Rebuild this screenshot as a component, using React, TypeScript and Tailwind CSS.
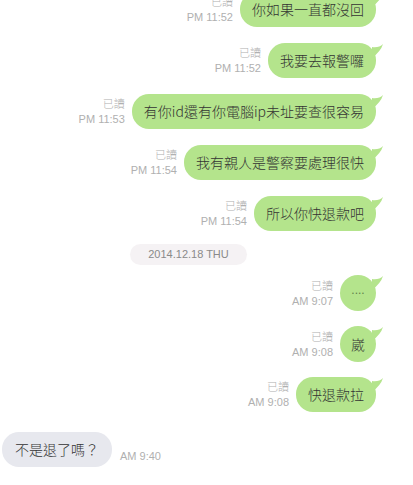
import React from "react";

const cjk = '"Noto Sans CJK TC", "Noto Sans CJK SC", "Liberation Sans", sans-serif';
const latin = '"Liberation Sans", Arial, sans-serif';

type Sent = { text: string; time: string; round?: boolean };

const sent1: Sent[] = [
  { text: "你如果一直都沒回", time: "PM 11:52" },
  { text: "我要去報警囉", time: "PM 11:52" },
  { text: "有你id還有你電腦ip未址要查很容易", time: "PM 11:53" },
  { text: "我有親人是警察要處理很快", time: "PM 11:54" },
  { text: "所以你快退款吧", time: "PM 11:54" },
];

const sent2: Sent[] = [
  { text: "....", time: "AM 9:07", round: true },
  { text: "崴", time: "AM 9:08", round: true },
  { text: "快退款拉", time: "AM 9:08" },
];

function Tail() {
  return (
    <svg
      className="absolute -right-[10px] top-[1px]"
      width="14"
      height="16"
      viewBox="0 0 14 16"
    >
      <path d="M0 3 Q7 4 11 0 Q9 7 0 14 Z" fill="#b4e48c" />
    </svg>
  );
}

function SentRow({ m }: { m: Sent }) {
  const dots = m.text === "....";
  return (
    <div className="flex items-end justify-end gap-[7px]">
      <div
        className="flex flex-col items-end pb-[2px] text-[#b0b0b0]"
        style={{ fontFamily: latin }}
      >
        <span
          className="text-[11px] font-light leading-[16px]"
          style={{ fontFamily: cjk }}
        >
          已讀
        </span>
        <span className="text-[11px] leading-[16px]">{m.time}</span>
      </div>
      <div
        className={
          m.round
            ? "relative flex h-[36px] w-[36px] items-center justify-center rounded-full bg-[#b4e48c] text-[14px] font-light text-[#333333]"
            : "relative flex h-[35px] items-center rounded-[17px] bg-[#b4e48c] px-[12px] text-[14px] font-light text-[#333333]"
        }
        style={{ fontFamily: cjk }}
      >
        <span
          className={dots ? "relative -top-[3px] text-[12px] font-normal text-[#5f7d4a]" : ""}
          style={dots ? { fontFamily: latin } : undefined}
        >
          {m.text}
        </span>
        <Tail />
      </div>
    </div>
  );
}

export default function App() {
  return (
    <div className="h-[485px] w-[413px] overflow-hidden bg-white">
      <div className="-mt-[8px] flex flex-col pr-[37px]">
        <div className="flex flex-col gap-[16px]">
          {sent1.map((m, i) => (
            <SentRow key={i} m={m} />
          ))}
        </div>
        <div className="mt-[13px] mb-[10px] pl-[130px]">
          <div
            className="flex h-[21px] w-[117px] items-center justify-center rounded-full bg-[#f5f2f4] text-[11px] text-[#8a8a8a]"
            style={{ fontFamily: latin }}
          >
            2014.12.18 THU
          </div>
        </div>
        <div className="flex flex-col gap-[15px]">
          {sent2.map((m, i) => (
            <SentRow key={i} m={m} />
          ))}
        </div>
        <div className="mt-[20px] flex items-end gap-[8px] pl-[2px]">
          <div
            className="flex h-[35px] items-center rounded-[17px] bg-[#e7e8ee] px-[13px] text-[14px] font-light text-[#333333]"
            style={{ fontFamily: cjk }}
          >
            不是退了嗎？
          </div>
          <span
            className="pb-[3px] text-[11px] leading-[16px] text-[#b0b0b0]"
            style={{ fontFamily: latin }}
          >
            AM 9:40
          </span>
        </div>
      </div>
    </div>
  );
}
